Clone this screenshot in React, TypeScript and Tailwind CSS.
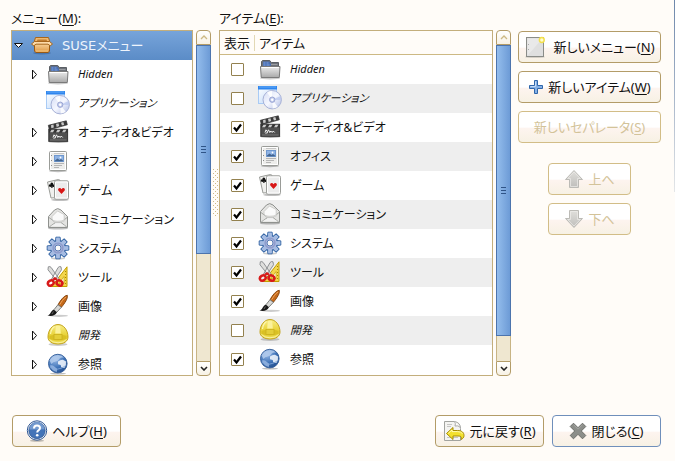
import type { ReactNode } from "react";

function IconBase({ children }: { children: ReactNode }) {
  return (
    <svg viewBox="0 0 25 25" className="size-[25px] shrink-0" aria-hidden="true">
      {children}
    </svg>
  );
}

function SharedGradients() {
  return (
    <svg className="absolute size-0" aria-hidden="true">
      <defs>
        <linearGradient id="g-folder" x1="0" y1="0" x2="0" y2="1">
          <stop offset="0" stopColor="#ececec" />
          <stop offset="1" stopColor="#a9a9a9" />
        </linearGradient>
        <linearGradient id="g-box" x1="0" y1="0" x2="0" y2="1">
          <stop offset="0" stopColor="#fbd9a4" />
          <stop offset="1" stopColor="#dd9540" />
        </linearGradient>
        <linearGradient id="g-window" x1="0" y1="0" x2="1" y2="1">
          <stop offset="0" stopColor="#ffffff" />
          <stop offset="1" stopColor="#b9d6fa" />
        </linearGradient>
        <linearGradient id="g-disc" x1="0" y1="0" x2="1" y2="1">
          <stop offset="0" stopColor="#d4dcf4" />
          <stop offset="0.5" stopColor="#f5f7ff" />
          <stop offset="1" stopColor="#aebbe4" />
        </linearGradient>
        <linearGradient id="g-gear" x1="0" y1="0" x2="1" y2="1">
          <stop offset="0" stopColor="#a3b9e2" />
          <stop offset="1" stopColor="#b5afd6" />
        </linearGradient>
        <radialGradient id="g-globe" cx="0.35" cy="0.25" r="0.8">
          <stop offset="0" stopColor="#9dbde8" />
          <stop offset="0.6" stopColor="#3f73b8" />
          <stop offset="1" stopColor="#244f8e" />
        </radialGradient>
        <linearGradient id="g-helmet" x1="0" y1="0" x2="0" y2="1">
          <stop offset="0" stopColor="#f8ee86" />
          <stop offset="0.6" stopColor="#e6cf30" />
          <stop offset="1" stopColor="#efdf58" />
        </linearGradient>
        <linearGradient id="g-arrow" x1="0" y1="0" x2="0" y2="1">
          <stop offset="0" stopColor="#e0dfdb" />
          <stop offset="1" stopColor="#bfbebb" />
        </linearGradient>
      </defs>
    </svg>
  );
}

function PackageIcon() {
  return (
    <IconBase>
      <ellipse cx="12" cy="20" rx="9" ry="1.4" fill="#2f5a92" opacity="0.5" />
      <path d="M4.5 9.5h15v8.6l-1.3 1.4H5.8l-1.3-1.4z" fill="url(#g-box)" stroke="#9a5a14" />
      <path d="M5.500 4.500h13l1.200 4H4.300z" fill="#eeb870" stroke="#a8661c" />
      <path d="M7.500 6.500h9l.5 1.500H7z" fill="#c07c30" />
      <path d="M4.500 8.500h15l3 2.500-2.300 1.800-2.200-1.600H6L3.800 12.800l-2.300-1.800z" fill="#fcdaa8" stroke="#a8661c" strokeLinejoin="round" />
      <path d="M6 18h12" stroke="#f5c983" />
    </IconBase>
  );
}

function FolderIcon() {
  return (
    <IconBase>
      <ellipse cx="12" cy="21.200" rx="10" ry="1.300" fill="#000" opacity="0.200" />
      <path d="M3.500 20V4.500l1-1h7.300l1.500 2h7.200v14.500z" fill="#6d7178" stroke="#5b5f65" />
      <path d="M5 4.500h6.300l1.700 2.300V9H5z" fill="#4a6fb3" />
      <path d="M5.500 6h2m1 0h2m-5 2h2m1 0h3" stroke="#8fb0e6" strokeWidth="0.800" />
      <path d="M13 7.500h6.500" stroke="#9a9da1" />
      <path d="M2.500 9.500h19.500l-.7 11H3.200z" fill="url(#g-folder)" stroke="#7a7a7a" strokeLinejoin="round" />
      <path d="M3.600 10.500h17.300" stroke="#fff" />
    </IconBase>
  );
}

function ApplicationIcon() {
  return (
    <IconBase>
      <rect x="0.500" y="0.500" width="18" height="17" fill="url(#g-window)" stroke="#a9cbf5" />
      <rect x="0" y="0" width="19" height="3.500" fill="#2f86ee" />
      <path d="M1 1h17" stroke="#64aaf7" />
      <circle cx="14.200" cy="13.700" r="9.200" fill="url(#g-disc)" stroke="#a7b1d6" />
      <path d="M14.200 13.700L9 6.500a9 9 0 0 1 5-1.700zM14.200 13.700l5.500 7a9 9 0 0 1-5 1.800z" fill="#fff" opacity="0.850" />
      <path d="M14.200 13.700L22.500 10a9 9 0 0 1 .4 4z" fill="#b6c4ee" opacity="0.700" />
      <circle cx="14.200" cy="13.700" r="2.700" fill="#c3cced" stroke="#8f9bcb" strokeWidth="0.800" />
      <circle cx="14.200" cy="13.700" r="1.200" fill="#fff" />
    </IconBase>
  );
}

function VideoIcon() {
  return (
    <IconBase>
      <ellipse cx="12.500" cy="21.800" rx="10" ry="1.100" fill="#000" opacity="0.300" />
      <path d="M2.300 5.300L20.300.8l1 4L3.400 9.800z" fill="#3a3a3a" stroke="#333" strokeWidth="0.700" />
      <path d="M5 5.300l2.500-.8.300 3-2.500.8zM10 4l2.500-.7.700 2.800-2.500.8zM15 2.700l2.300-.7.900 2.700-2.300.7z" fill="#c9c9c9" />
      <rect x="2.800" y="9.300" width="18.800" height="12" fill="#4f4f4f" stroke="#333" />
      <path d="M3 9.500h18.500v3H3z" fill="#333" />
      <path d="M5.500 9.700h3l-1.500 2.600H4zM11.500 9.700h3L13 12.300h-3zM17.500 9.700h3L19 12.300h-3z" fill="#c9c9c9" />
      <path d="M7 17.500l1-2.700 1.500 2 1-2 1.300 2.700 1-1.500 1.400 1.500 1-1.500 1.500 1.500M7.500 18.300l2.500-.8" stroke="#f4f4f4" fill="none" />
      <path d="M4 20h16.500" stroke="#777" />
    </IconBase>
  );
}

function OfficeIcon() {
  return (
    <IconBase>
      <ellipse cx="12" cy="22" rx="9" ry="1.200" fill="#000" opacity="0.250" />
      <rect x="3.500" y="2.500" width="17" height="19" rx="1" fill="#ededeb" stroke="#9a9c98" />
      <path d="M4.500 3.500h15v17h-15z" fill="none" stroke="#fff" />
      <path d="M5.500 6v1m0 4v1m0 4v1" stroke="#888" />
      <rect x="8.500" y="6.500" width="9" height="6" fill="#8fb3e4" stroke="#6f98cf" />
      <path d="M9 11.500l2.500-2 2 1.500 1.500-1 2 1.500v.8H9z" fill="#43658f" />
      <circle cx="14.500" cy="8.500" r="0.900" fill="#fff" />
      <path d="M8 14.500h10M8 16.500h8M8 18.500h5" stroke="#b5b5b5" />
      <path d="M8 4.500h10" stroke="#c6c6c6" />
    </IconBase>
  );
}

function GamesIcon() {
  return (
    <IconBase>
      <ellipse cx="14" cy="21.800" rx="9" ry="1.300" fill="#000" opacity="0.250" />
      <path d="M1.500 4l11-2.500 1.500.8v17l-9 .7z" fill="#f0f0ee" stroke="#9a9c98" strokeLinejoin="round" />
      <path d="M5.800 4.500a1.400 1.400 0 0 1 1.300 2 1.300 1.300 0 1 1-.8 1.800l.5 1.400H5l.3-1.500a1.300 1.300 0 1 1-.7-1.800 1.400 1.400 0 0 1 1.200-1.900z" fill="#111" />
      <rect x="8.500" y="2.800" width="14" height="18.400" rx="1.500" fill="#ececec" stroke="#9a9c98" />
      <path d="M9.500 4h12v16h-12z" fill="none" stroke="#fff" />
      <path d="M15.500 16l-3.200-3.500c-1-2.400 2-3.400 3.200-1.300 1.200-2.100 4.200-1.100 3.200 1.300z" fill="#d81616" />
    </IconBase>
  );
}

function MailIcon() {
  return (
    <IconBase>
      <ellipse cx="12" cy="21.400" rx="10" ry="1.200" fill="#000" opacity="0.250" />
      <path d="M2.500 9.500L8.500 3q3.200-2.800 6.500 0l6.500 6.500v11h-19z" fill="#e4e4e2" stroke="#8f918e" strokeLinejoin="round" />
      <path d="M6 9.500l5.500-5.500 6.700 3.500v6.500l-6 1.500L6 13z" fill="#fafafa" stroke="#c4c4c2" strokeWidth="0.800" />
      <path d="M3 10.500l6.500 5h5.500l6-5M3.200 20l6.300-4.500M20.800 20L15 15.500" fill="none" stroke="#9b9d9a" strokeWidth="0.900" />
      <path d="M5 12.200q6 3 14 0v1.800l-4.200 1.700H9.500z" fill="#d4d4d2" />
      <path d="M4.500 19.300l5.400-3h4.700l4.900 3" fill="#f2f2f2" />
    </IconBase>
  );
}

function SystemIcon() {
  const teeth = [0, 45, 90, 135, 180, 225, 270, 315];
  return (
    <IconBase>
      <ellipse cx="12" cy="22.500" rx="7" ry="1" fill="#000" opacity="0.200" />
      {teeth.map((angle) => (
        <path key={angle} d="M9.500 6l.4-4.800h4.200l.4 4.800z" fill="#9fb8e0" stroke="#3465a4" strokeLinejoin="round" transform={`rotate(${angle} 12 12)`} />
      ))}
      <circle cx="12" cy="12" r="7.300" fill="url(#g-gear)" stroke="#3465a4" />
      {teeth.map((angle) => (
        <path key={angle} d="M10 6.500l.4-4.700h3.200l.4 4.700z" fill="#a6bce2" transform={`rotate(${angle} 12 12)`} />
      ))}
      <circle cx="12" cy="12" r="4.900" fill="none" stroke="#8b9ccc" strokeWidth="1.400" />
      <circle cx="12" cy="12" r="3" fill="#fbfbfb" stroke="#5a7db4" />
    </IconBase>
  );
}

function ToolsIcon() {
  return (
    <IconBase>
      <path d="M21 1.800v19.700H5.500z" fill="#f3d64e" stroke="#c4a000" strokeLinejoin="round" />
      <path d="M18 11.500v7h-5z" fill="#fffbe6" stroke="#c4a000" strokeWidth="0.700" />
      <path d="M19.500 6v1m0 2v1m0 2v1m0 2v1m0 2v1" stroke="#a78800" />
      <path d="M2.300 1.800q1.700-.8 2.900.7l8.300 12-2.500 1.500L2 4.800zM15 1.800q-1.700-.8-2.900.7L5.500 14.200 8 15.800 15.500 4.800z" fill="#dededc" stroke="#85878a" strokeWidth="0.900" />
      <ellipse cx="4.800" cy="18" rx="3" ry="2.400" fill="none" stroke="#d81a1a" strokeWidth="2.500" transform="rotate(-30 4.800 18)" />
      <ellipse cx="13.500" cy="18" rx="3" ry="2.400" fill="none" stroke="#d81a1a" strokeWidth="2.500" transform="rotate(30 13.500 18)" />
      <path d="M7 14.500l2-1.500 2 1.500" fill="none" stroke="#d81a1a" strokeWidth="1.600" />
    </IconBase>
  );
}

function GraphicsIcon() {
  return (
    <IconBase>
      <ellipse cx="13" cy="21.800" rx="9" ry="1.100" fill="#000" opacity="0.200" />
      <path d="M21.300 1.300c.9 2.700-2.600 8.200-6 12l-3.300-2.500c2.300-4.300 6-9.200 9.300-9.500z" fill="#c4691a" stroke="#7d3c06" strokeWidth="0.900" />
      <path d="M20 3c-2.500 1.500-4.700 5-6.300 7.700" stroke="#f2a860" fill="none" />
      <path d="M12 10.700l3.400 2.600-4.700 5-2.900-2.400z" fill="#d8d8d6" stroke="#6e706d" strokeWidth="0.900" />
      <path d="M7.700 15.700l3.200 2.600c-1.500 3.700-5.900 4.200-9.600 3.200 3.700-.7 3-4.700 6.400-5.800z" fill="#181818" />
      <path d="M7.500 17.500q-1 1.500-1.500 2.500" stroke="#777" fill="none" strokeWidth="0.800" />
    </IconBase>
  );
}

function DevelopmentIcon() {
  return (
    <IconBase>
      <ellipse cx="12" cy="21.400" rx="9.500" ry="1.600" fill="#000" opacity="0.200" />
      <path d="M2 14C2 7 6.500 1.500 12 1.500S22 7 22 14c0 4.500-4.500 7-10 7S2 18.500 2 14z" fill="url(#g-helmet)" stroke="#c4a520" />
      <path d="M9.200 10.500l.6-7.500h4.400l.6 7.500z" fill="#fbf19a" />
      <path d="M3.500 13q8.500-3.500 17 0v3q-8.500 3-17 0z" fill="#d9c024" />
      <rect x="8" y="11.500" width="8" height="5" fill="#e4ce38" stroke="#c9ad1c" strokeWidth="0.700" />
      <path d="M4.500 11Q5 6 8.500 3.500" stroke="#fdf6b0" strokeWidth="1.200" fill="none" />
      <path d="M3.500 16.500q2.500 3.200 8.500 3.300 6-.1 8.500-3.300" stroke="#faf0a0" fill="none" />
    </IconBase>
  );
}

function InternetIcon() {
  return (
    <IconBase>
      <ellipse cx="12" cy="21.600" rx="8" ry="1" fill="#000" opacity="0.250" />
      <circle cx="11.800" cy="11.600" r="9.300" fill="url(#g-globe)" stroke="#3c659f" />
      <path d="M3.500 8.500Q6 3.300 12 3q4 .2 6 2.500-3-.5-4.500 1.300-1.200 2.400-3.800 2.800Q7 10 5.500 12z" fill="#b3cbec" opacity="0.850" />
      <path d="M12 9.500q2.500-2 5-1.800l3 1.800q.5 4-1.600 6.500l-3.200-.7-.5-2.300-2.700-.7z" fill="#edf3fb" opacity="0.900" />
      <path d="M3.800 13.500q3-.6 4.500 1l3 2.500-.5 3q-5-.7-7-6.500z" fill="#9dbce6" opacity="0.800" />
      <path d="M4 15Q11 20 20 13.500" fill="none" stroke="#86abdc" strokeWidth="0.800" />
    </IconBase>
  );
}

function NewMenuIcon() {
  return (
    <IconBase>
      <ellipse cx="11" cy="22" rx="10" ry="1" fill="#000" opacity="0.150" />
      <rect x="2.500" y="2.500" width="17" height="19" fill="#dfdfdf" stroke="#8a8c88" />
      <path d="M3.500 3.500h15l-15 17z" fill="#e9e9e9" />
      <path d="M4.500 9v1m0 4v1" stroke="#aaa" />
      <circle cx="17.800" cy="5" r="2.400" fill="#fffbd0" stroke="#f3e04c" strokeWidth="1.500" />
    </IconBase>
  );
}

function AddIcon() {
  return (
    <svg viewBox="0 0 16 16" className="size-4 shrink-0" aria-hidden="true">
      <path d="M6.500 1.500h3v5h5v3h-5v5h-3v-5h-5v-3h5z" fill="#86b1e6" stroke="#2f66ab" strokeLinejoin="round" />
      <path d="M7.500 2.500v5h-5" stroke="#c6dcf6" fill="none" />
    </svg>
  );
}

function ArrowIcon({ down }: { down?: boolean }) {
  return (
    <svg viewBox="0 0 20 20" className="size-5 shrink-0" aria-hidden="true">
      <path
        d={down ? "M5.500 1.500h9v8h4L10 18.500 1.500 9.500h4z" : "M5.500 18.500h9v-8h4L10 1.500 1.500 10.500h4z"}
        fill="url(#g-arrow)"
        stroke="#bcbbb6"
        strokeLinejoin="round"
      />
      <path
        d={down ? "M6.500 2.500h7v8h2.800L10 17 3.700 10.500h2.800z" : "M6.500 17.500h7v-8h2.800L10 3 3.700 9.500h2.800z"}
        fill="none"
        stroke="#eeede9"
        strokeWidth="0.700"
      />
    </svg>
  );
}

function HelpIcon() {
  return (
    <svg viewBox="0 0 22 22" className="size-[22px] shrink-0" aria-hidden="true">
      <ellipse cx="11" cy="20.800" rx="7" ry="1" fill="#000" opacity="0.250" />
      <circle cx="11" cy="10.500" r="9.700" fill="#fff" stroke="#2d5593" />
      <circle cx="11" cy="10.500" r="8.200" fill="#4474b8" stroke="#2d5593" strokeWidth="0.800" />
      <path d="M3.500 9.500a7.500 7.500 0 0 1 15-.3q-7 .3-15 .3z" fill="#86a9d8" opacity="0.700" />
      <path d="M8 8.500q0-3 3-3t3 2.600q0 1.400-1.500 2.300-1.300.8-1.300 2.100" fill="none" stroke="#fff" strokeWidth="2" />
      <circle cx="11.200" cy="15.200" r="1.300" fill="#fff" />
    </svg>
  );
}

function RevertIcon() {
  return (
    <svg viewBox="0 0 22 22" className="size-[22px] shrink-0" aria-hidden="true">
      <path d="M1.500 1.500h10q6 1 6 7v12h-16z" fill="#f4f4f2" stroke="#a2a4a0" />
      <path d="M4 4.500h5M4 6.500h4M4 17.500h11" stroke="#c5c5c3" />
      <path d="M11.500 1.500q1.500 2 .5 4.500 3-1 5.500 1.500" fill="#fff" stroke="#aaa" />
      <path d="M3.500 13.500L10 7.500v3h4.500c4.500 0 6.500 2.200 6.500 5 0 2-1.200 3.200-3 4 .8-2.500.3-3.500-3-3.500h-5v3.500z" fill="#f3e02c" stroke="#a58b04" strokeLinejoin="round" />
      <path d="M5.300 13.300L9 10v1.600h5.500q3.500 0 5 2" stroke="#fffab4" fill="none" />
    </svg>
  );
}

function CloseIcon() {
  return (
    <svg viewBox="0 0 18 18" className="size-[18px] shrink-0" aria-hidden="true">
      <path d="M4.500 1.200L9 5.700l4.500-4.500 3.300 3.300L12.300 9l4.500 4.500-3.300 3.300L9 12.300l-4.500 4.500-3.300-3.300L5.700 9 1.200 4.500z" fill="#8c8e8a" stroke="#6a6c68" strokeLinejoin="round" />
      <path d="M4.500 2.700L9 7.200l4.500-4.500" stroke="#a5a7a3" fill="none" />
    </svg>
  );
}

type Entry = {
  name: string;
  icon: () => ReactNode;
  visible: boolean;
  leaf?: boolean;
};

const entries: Entry[] = [
  { name: "Hidden", icon: FolderIcon, visible: false },
  { name: "アプリケーション", icon: ApplicationIcon, visible: false, leaf: true },
  { name: "オーディオ&ビデオ", icon: VideoIcon, visible: true },
  { name: "オフィス", icon: OfficeIcon, visible: true },
  { name: "ゲーム", icon: GamesIcon, visible: true },
  { name: "コミュニケーション", icon: MailIcon, visible: true },
  { name: "システム", icon: SystemIcon, visible: true },
  { name: "ツール", icon: ToolsIcon, visible: true },
  { name: "画像", icon: GraphicsIcon, visible: true },
  { name: "開発", icon: DevelopmentIcon, visible: false },
  { name: "参照", icon: InternetIcon, visible: true },
];

function EntryName({ entry }: { entry: Entry }) {
  return (
    <span className={entry.visible ? "text-xs whitespace-nowrap" : "pb-[2px] text-[11px] whitespace-nowrap italic"}>{entry.name}</span>
  );
}

function Mnemonic({ letter }: { letter: string }) {
  return (
    <>
      (<span className="underline underline-offset-2">{letter}</span>)
    </>
  );
}

function PushButton({ children, className, disabled, focused }: { children: ReactNode; className: string; disabled?: boolean; focused?: boolean }) {
  const tone = disabled
    ? "border-[#d2bd87] text-[#d3c399]"
    : focused
      ? "border-[#6f8fbb] text-[#111]"
      : "border-[#b39c68] text-[#111]";
  return (
    <button
      type="button"
      disabled={disabled}
      className={`flex h-8 items-center justify-center rounded border bg-linear-to-b from-white from-50% via-[#fdf4ef] via-55% to-[#f7f1e4] whitespace-nowrap ${tone} ${className}`}
    >
      {children}
    </button>
  );
}

function Scrollbar({ label, thumb }: { label: string; thumb: string }) {
  const end = "flex h-[15px] w-full shrink-0 items-center justify-center border border-[#b39c68] bg-linear-to-b from-white to-[#f7f1e4]";
  return (
    <div className="ml-[3px] flex w-[15px] shrink-0 flex-col">
      <button type="button" aria-label={`${label} ▲`} className={`${end} rounded-t`}>
        <svg viewBox="0 0 8 5" className="h-[5px] w-2" aria-hidden="true">
          <path d="M1 4l3-3 3 3" fill="none" stroke="#cdb984" strokeWidth="1.300" />
        </svg>
      </button>
      <div className="min-h-0 flex-1 border-x border-[#c8b484] bg-[#efe7d0]">
        <div className={`-mx-px flex flex-col items-center justify-center gap-[2px] border border-[#4c74ad] bg-linear-to-r from-[#94bdec] to-[#6d9bd6] ${thumb}`}>
          <span className="h-px w-[5px] bg-[#2f5487]" />
          <span className="h-px w-[5px] bg-[#2f5487]" />
          <span className="h-px w-[5px] bg-[#2f5487]" />
        </div>
      </div>
      <button type="button" aria-label={`${label} ▼`} className={`${end} rounded-b`}>
        <svg viewBox="0 0 8 5" className="h-[5px] w-2" aria-hidden="true">
          <path d="M1 1l3 3 3-3" fill="none" stroke="#222" strokeWidth="1.600" />
        </svg>
      </button>
    </div>
  );
}

function MenuTree() {
  return (
    <ul id="menu-tree" className="min-w-0 flex-1 overflow-hidden border border-[#c3ae7c] bg-white">
      <li className="flex h-[29px] items-center bg-linear-to-b from-[#77a4da] to-[#5b8cc7] text-[#eef4fc]">
        <button type="button" aria-label="SUSEメニュー ▼" className="mr-[5px] flex w-[13px] justify-center">
          <svg viewBox="0 0 11 7" className="h-[7px] w-[11px]" aria-hidden="true">
            <path d="M1.500 1.500h8l-4 4z" fill="#fff" stroke="#111" />
          </svg>
        </button>
        <PackageIcon />
        <span className="ml-[7px] font-['DejaVu_Sans','Noto_Sans_CJK_JP',sans-serif]">SUSEメニュー</span>
      </li>
      {entries.map((entry) => (
        <li key={entry.name} className="flex h-[29px] items-center pl-4">
          <span className="mr-[5px] flex w-[13px] shrink-0 justify-center">
            {!entry.leaf && (
              <button type="button" aria-label={`${entry.name} ▶`} className="flex">
                <svg viewBox="0 0 7 11" className="h-[11px] w-[7px]" aria-hidden="true">
                  <path d="M1.500 1v9l4-4.500z" fill="#fff" stroke="#111" />
                </svg>
              </button>
            )}
          </span>
          {entry.icon()}
          <span className="ml-[7px] flex">
            <EntryName entry={entry} />
          </span>
        </li>
      ))}
    </ul>
  );
}

function VisibilityBox({ entry }: { entry: Entry }) {
  return (
    <label className="mx-auto grid size-[13px]">
      <input
        type="checkbox"
        aria-label={entry.name}
        defaultChecked={entry.visible}
        className="peer col-start-1 row-start-1 size-[13px] appearance-none rounded-[1px] border border-[#93814f] bg-white"
      />
      <svg viewBox="0 0 13 13" className="invisible col-start-1 row-start-1 size-[13px] peer-checked:visible" aria-hidden="true">
        <path d="M3 6.500l2.500 3L10 3.500" fill="none" stroke="#000" strokeWidth="2.200" />
      </svg>
    </label>
  );
}

function ItemTable() {
  return (
    <div className="min-w-0 flex-1 overflow-hidden border border-[#c3ae7c] bg-white">
      <table id="item-table" className="w-full table-fixed border-separate border-spacing-0 text-left">
        <thead>
          <tr className="h-6 bg-[#fffcf8]">
            <th className="w-[35px] border-b border-[#cdb984] p-0 font-normal">
              <span className="flex h-4 items-center justify-center border-r border-[#e2d8b4] whitespace-nowrap">表示</span>
            </th>
            <th className="border-b border-[#cdb984] p-0 pl-1 font-normal">
              <span className="flex h-4 items-center">アイテム</span>
            </th>
          </tr>
        </thead>
        <tbody>
          {entries.map((entry) => (
            <tr key={entry.name} className="h-[29px] even:bg-[#eeeeee]">
              <td className="p-0">
                <VisibilityBox entry={entry} />
              </td>
              <td className="p-0">
                <span className="flex items-center gap-[7px] pl-[3px]">
                  {entry.icon()}
                  <EntryName entry={entry} />
                </span>
              </td>
            </tr>
          ))}
        </tbody>
      </table>
    </div>
  );
}

function Splitter() {
  return (
    <div role="separator" aria-orientation="vertical" className="flex w-2 shrink-0 items-center justify-center">
      <svg viewBox="0 0 5 47" className="h-[47px] w-[5px]" aria-hidden="true">
        {Array.from({ length: 12 }, (_, i) => (
          <g key={i} fill="#cdb984">
            <rect x="0" y={i * 4} width="1" height="1" />
            <rect x="4" y={i * 4} width="1" height="1" />
            <rect x="2" y={i * 4 + 2} width="1" height="1" />
          </g>
        ))}
      </svg>
    </div>
  );
}

export default function App() {
  return (
    <div className="flex h-screen bg-[#fffcf8] font-['Noto_Sans','Noto_Sans_CJK_JP',sans-serif] text-[13px] leading-4 text-[#111] [font-feature-settings:'palt']">
      <SharedGradients />
      <div className="flex min-w-0 flex-1 flex-col pt-2 pr-[13px] pb-[14px] pl-[11px]">
        <main className="flex min-h-0 flex-1">
          <section aria-labelledby="menu-label" className="flex w-[200px] shrink-0 flex-col">
            <h2 id="menu-label" className="flex h-[22px] items-center pb-[2px]">
              <span>メニュー<Mnemonic letter="M" />:</span>
            </h2>
            <div className="flex min-h-0 flex-1">
              <MenuTree />
              <Scrollbar label="メニュー" thumb="h-[66%]" />
            </div>
          </section>
          <Splitter />
          <section aria-labelledby="item-label" className="flex min-w-0 flex-1 flex-col">
            <h2 id="item-label" className="flex h-[22px] items-center pb-[2px]">
              <span>アイテム<Mnemonic letter="E" />:</span>
            </h2>
            <div className="flex min-h-0 flex-1">
              <ItemTable />
              <Scrollbar label="アイテム" thumb="h-[92%]" />
            </div>
          </section>
          <div className="ml-[7px] flex w-[143px] shrink-0 flex-col gap-2 pt-[23px]">
            <PushButton className="gap-1">
              <NewMenuIcon />
              <span>新しいメニュー<Mnemonic letter="N" /></span>
            </PushButton>
            <PushButton className="gap-1">
              <AddIcon />
              <span>新しいアイテム<Mnemonic letter="W" /></span>
            </PushButton>
            <PushButton className="gap-1" disabled>
              <span>新しいセパレータ<Mnemonic letter="S" /></span>
            </PushButton>
            <div className="mt-3 flex flex-col items-center gap-2">
              <PushButton className="w-[83px] gap-1" disabled>
                <ArrowIcon />
                <span>上へ</span>
              </PushButton>
              <PushButton className="w-[83px] gap-1" disabled>
                <ArrowIcon down />
                <span>下へ</span>
              </PushButton>
            </div>
          </div>
        </main>
        <footer className="mt-[39px] flex gap-2 pl-px">
          <PushButton className="mr-auto w-[109px] gap-1">
            <HelpIcon />
            <span>ヘルプ<Mnemonic letter="H" /></span>
          </PushButton>
          <PushButton className="w-[109px] gap-1">
            <RevertIcon />
            <span>元に戻す<Mnemonic letter="R" /></span>
          </PushButton>
          <PushButton className="w-[109px] gap-1" focused>
            <CloseIcon />
            <span>閉じる<Mnemonic letter="C" /></span>
          </PushButton>
        </footer>
      </div>
      <div className="h-48 w-px bg-linear-to-b from-[#6d87ab] to-[#e4e6e8]" />
    </div>
  );
}
